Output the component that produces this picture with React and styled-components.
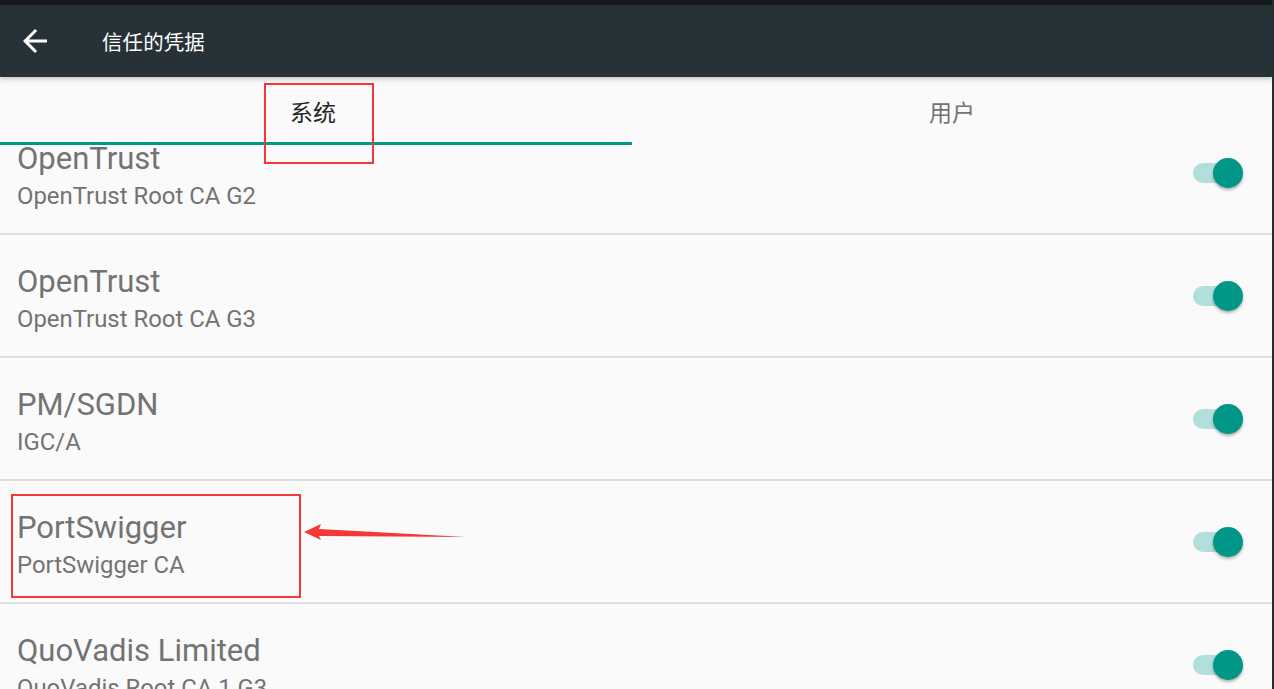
import React from "react";
import styled, { createGlobalStyle } from "styled-components";

const Global = createGlobalStyle`
  html, body { margin: 0; padding: 0; background: #fafafa; overflow: hidden; }
  * { box-sizing: border-box; }
`;

const Screen = styled.div`
  position: relative;
  width: 1274px;
  height: 689px;
  display: flex;
  flex-direction: column;
  background: #fafafa;
  border-right: 2px solid #2a2d30;
  font-family: Roboto, "Noto Sans CJK SC", sans-serif;
  overflow: hidden;
`;

const StatusStrip = styled.div`
  height: 5px;
  background: #15191c;
  flex: none;
`;

const Toolbar = styled.header`
  position: relative;
  z-index: 2;
  height: 72px;
  flex: none;
  display: flex;
  align-items: center;
  background: #263238;
  padding-left: 17px;
  box-shadow: 0 2px 5px rgba(0, 0, 0, 0.22);
`;

const BackButton = styled.button`
  width: 36px;
  height: 36px;
  padding: 0;
  border: 0;
  background: transparent;
  display: flex;
  color: #ffffff;
`;

const Title = styled.h1`
  margin: 0 0 0 49px;
  font-family: "Noto Sans CJK SC", sans-serif;
  font-weight: 400;
  font-size: 20.4px;
  color: #ffffff;
  letter-spacing: 0.2px;
`;

const TabBar = styled.nav`
  position: relative;
  z-index: 1;
  height: 68px;
  flex: none;
  display: grid;
  grid-template-columns: 632px 1fr;
  background: #fafafa;
`;

const Tab = styled.div`
  display: flex;
  align-items: center;
  justify-content: center;
  padding: 3px ${(p) => (p.$active ? "6px" : "0")} 0 0;
  font-family: "Noto Sans CJK SC", sans-serif;
  font-size: 23px;
  color: ${(p) => (p.$active ? "#262626" : "#737373")};
  border-bottom: 3px solid ${(p) => (p.$active ? "#009688" : "transparent")};
`;

const Viewport = styled.div`
  flex: 1;
  overflow: hidden;
`;

const List = styled.ul`
  list-style: none;
  margin: -33px 0 0;
  padding: 0;
`;

const Row = styled.li`
  position: relative;
  height: 123px;
  display: flex;
  align-items: center;
  padding: 0 29px 0 17px;
  border-bottom: 2px solid #dedede;
`;

const TextBlock = styled.div`
  flex: 1;
  margin-top: 11px;
  display: flex;
  flex-direction: column;
`;

const ItemTitle = styled.div`
  font-size: 31px;
  line-height: 36px;
  color: #737373;
`;

const ItemSub = styled.div`
  font-size: 23.9px;
  line-height: 38px;
  color: #737373;
`;

const Switch = styled.div`
  position: relative;
  width: 50px;
  height: 30px;
  flex: none;
`;

const Track = styled.span`
  position: absolute;
  left: 0;
  top: 5px;
  width: 47px;
  height: 20px;
  border-radius: 10px;
  background: #b2dfdb;
`;

const Thumb = styled.span`
  position: absolute;
  right: 0;
  top: 0;
  width: 30px;
  height: 30px;
  border-radius: 50%;
  background: #009688;
  box-shadow: 0 2px 3px rgba(0, 0, 0, 0.3);
`;

const RedBox = styled.div`
  position: absolute;
  z-index: 5;
  border: 2px solid #f43838;
  pointer-events: none;
`;

const ArrowLayer = styled.svg`
  position: absolute;
  z-index: 5;
  left: 0;
  top: 0;
  pointer-events: none;
`;

const items = [
  ["OpenTrust", "OpenTrust Root CA G2"],
  ["OpenTrust", "OpenTrust Root CA G3"],
  ["PM/SGDN", "IGC/A"],
  ["PortSwigger", "PortSwigger CA"],
  ["QuoVadis Limited", "QuoVadis Root CA 1 G3"],
];

export default function App() {
  return (
    <>
      <Global />
      <Screen>
        <StatusStrip />
        <Toolbar>
          <BackButton aria-label="back">
            <svg width="36" height="36" viewBox="0 0 24 24">
              <path
                fill="currentColor"
                d="M20 11H7.83l5.59-5.59L12 4l-8 8 8 8 1.41-1.41L7.83 13H20v-2z"
              />
            </svg>
          </BackButton>
          <Title>信任的凭据</Title>
        </Toolbar>
        <TabBar>
          <Tab $active>系统</Tab>
          <Tab>用户</Tab>
        </TabBar>
        <Viewport>
          <List>
            {items.map(([t, s], i) => (
              <Row key={i}>
                <TextBlock>
                  <ItemTitle>{t}</ItemTitle>
                  <ItemSub>{s}</ItemSub>
                </TextBlock>
                <Switch>
                  <Track />
                  <Thumb />
                </Switch>
              </Row>
            ))}
          </List>
        </Viewport>
        <RedBox style={{ left: 264, top: 83, width: 110, height: 81 }} />
        <RedBox style={{ left: 11, top: 494, width: 290, height: 104 }} />
        <ArrowLayer width="1274" height="689">
          <polygon
            fill="#f43838"
            points="304,532 321,524 319,529 466,537 319,536 321,540"
          />
        </ArrowLayer>
      </Screen>
    </>
  );
}
